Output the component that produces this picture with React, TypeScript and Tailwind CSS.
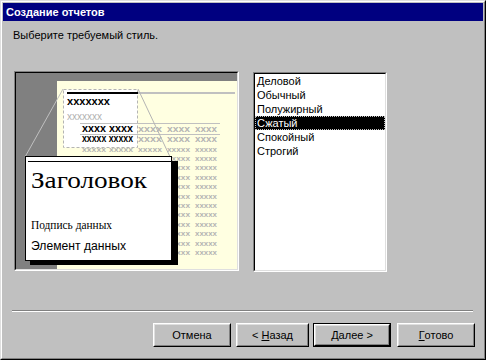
const styles = ['Деловой', 'Обычный', 'Полужирный', 'Сжатый', 'Спокойный', 'Строгий'];

const wordCols = [
  { x: 82, w: 24 },
  { x: 109, w: 24 },
  { x: 138, w: 24 },
  { x: 167, w: 23 },
  { x: 195, w: 22 },
];

const grayRowCenters = Array.from({ length: 12 }, (_, k) => 149 + k * 9.4);

// words that sit completely under the callout card are not drawn
const hidden = (c: number, x: number, w: number) => c > 154 && c < 268 && x + w < 178;

const Preview = () => (
  <svg width="221" height="196" viewBox="16 73 221 196" className="block">
    <rect x="16" y="73" width="221" height="196" fill="#808080" />
    {/* page */}
    <rect x="57" y="81" width="180" height="188" fill="#ffffe1" />
    <rect x="138" y="92" width="97" height="2" fill="#c0c0c0" />

    {/* magnified region */}
    <rect x="63.5" y="89.5" width="74" height="58" fill="#ffffff" stroke="#b4b4b4" strokeDasharray="3 2" />
    <rect x="67" y="92" width="71" height="2" fill="#000000" />
    <text x="67" y="105" fontFamily="Liberation Sans" fontSize="11" fontWeight="bold" textLength="43" lengthAdjust="spacingAndGlyphs">xxxxxxx</text>
    <text x="67" y="120" fontFamily="Liberation Sans" fontSize="10" fill="#b0b0b0" textLength="35" lengthAdjust="spacingAndGlyphs">xxxxxxx</text>

    <rect x="80" y="123" width="140" height="1" fill="#c0c0c0" />
    <rect x="80" y="134" width="140" height="1" fill="#c0c0c0" />

    {/* detail rows */}
    <text x="82" y="132" fontFamily="Liberation Sans" fontSize="11" fontWeight="bold" textLength="51" lengthAdjust="spacingAndGlyphs">xxxx xxxx</text>
    <text x="82" y="142" fontFamily="Liberation Sans" fontSize="10" fontWeight="bold" textLength="51" lengthAdjust="spacingAndGlyphs">xxxxx xxxxx</text>
    {[129, 139].map((c) =>
      wordCols.slice(2).map((col) => (
        <text key={`${c}-${col.x}`} x={col.x} y={c + 3} fontFamily="Liberation Sans" fontSize="9" fontWeight="bold" fill="#b4b4b4" textLength={col.w} lengthAdjust="spacingAndGlyphs">xxxx</text>
      ))
    )}
    {grayRowCenters.map((c) =>
      wordCols
        .filter((col) => !hidden(c, col.x, col.w))
        .map((col) => (
          <text key={`${c}-${col.x}`} x={col.x} y={c + 2.5} fontFamily="Liberation Sans" fontSize="8" fontWeight="bold" fill="#b4b4b4" textLength={col.w} lengthAdjust="spacingAndGlyphs">xxxxx</text>
        ))
    )}

    {/* zoom lines */}
    <line x1="63" y1="89" x2="25" y2="157" stroke="#c0c0c0" strokeWidth="1" />
    <line x1="138" y1="89" x2="172" y2="161" stroke="#b4b4b4" strokeWidth="1" />

    {/* callout */}
    <rect x="30" y="161" width="148" height="104" fill="#000000" />
    <rect x="25.5" y="156.5" width="146" height="104" fill="#ffffff" stroke="#000000" />
    <rect x="28" y="161" width="143" height="1" fill="#000000" />
    <text x="31" y="188" fontFamily="Liberation Serif" fontSize="24" textLength="116" lengthAdjust="spacingAndGlyphs">Заголовок</text>
    <text x="31" y="229" fontFamily="Liberation Serif" fontSize="12" textLength="81" lengthAdjust="spacingAndGlyphs">Подпись данных</text>
    <text x="31" y="250" fontFamily="Liberation Sans" fontSize="12" textLength="95" lengthAdjust="spacingAndGlyphs">Элемент данных</text>
  </svg>
);

const Button = ({ children, width, isDefault }: { children: React.ReactNode; width: string; isDefault?: boolean }) => (
  <div className={`${width} h-[24px] ${isDefault ? 'border border-black' : ''}`}>
    <div className="h-full border border-t-white border-l-white border-r-black border-b-black">
      <div className="h-full border border-t-[#dfdfdf] border-l-[#dfdfdf] border-r-[#808080] border-b-[#808080] flex items-center justify-center text-[11px] text-black">
        {children}
      </div>
    </div>
  </div>
);

export default function App() {
  return (
    <div className="w-[486px] h-[360px] bg-[#c0c0c0] border border-t-[#dfdfdf] border-l-[#dfdfdf] border-r-black border-b-black font-['Liberation_Sans',Arial,sans-serif]">
      <div className="h-full border border-t-white border-l-white border-r-[#808080] border-b-[#808080] p-px flex flex-col">
        <div className="h-[18px] bg-[#000080] text-white font-bold text-[11px] pl-[3px] flex items-center">
          Создание отчетов
        </div>

        <div className="mt-[8px] pl-[10px] text-[11px] leading-[13px] text-black">Выберите требуемый стиль.</div>

        <div className="mt-[29px] flex items-start">
          {/* preview frame */}
          <div className="ml-[11px] w-[225px] h-[200px] border border-t-[#808080] border-l-[#808080] border-b-white border-r-white">
            <div className="h-full border border-t-black border-l-black border-b-[#dfdfdf] border-r-[#dfdfdf]">
              <Preview />
            </div>
          </div>

          {/* style list */}
          <div className="ml-[14px] mt-px w-[134px] h-[200px] border border-t-[#808080] border-l-[#808080] border-b-white border-r-white">
            <div className="h-full border border-t-black border-l-black border-b-[#dfdfdf] border-r-[#dfdfdf] bg-white">
              {styles.map((s) => (
                <div
                  key={s}
                  className={
                    s === 'Сжатый'
                      ? 'h-[14px] leading-[12px] text-[11px] pl-px bg-black text-white border border-dotted border-[#c0c0c0]'
                      : 'h-[14px] leading-[14px] text-[11px] pl-[2px] text-black'
                  }
                >
                  {s}
                </div>
              ))}
            </div>
          </div>
        </div>

        <div className="mt-[38px] ml-[9px] w-[461px] h-[2px] border-t border-t-[#808080] border-b border-b-white" />

        <div className="mt-[11px] flex justify-end pr-[8px]">
          <Button width="w-[78px]">Отмена</Button>
          <div className="ml-[5px]">
            <Button width="w-[73px]">
              &lt; <span className="underline ml-[3px]">Н</span>азад
            </Button>
          </div>
          <div className="ml-[4px]">
            <Button width="w-[78px]" isDefault>
              <span className="underline">Д</span>алее &gt;
            </Button>
          </div>
          <div className="ml-[6px]">
            <Button width="w-[78px]">
              <span className="underline">Г</span>отово
            </Button>
          </div>
        </div>
      </div>
    </div>
  );
}
